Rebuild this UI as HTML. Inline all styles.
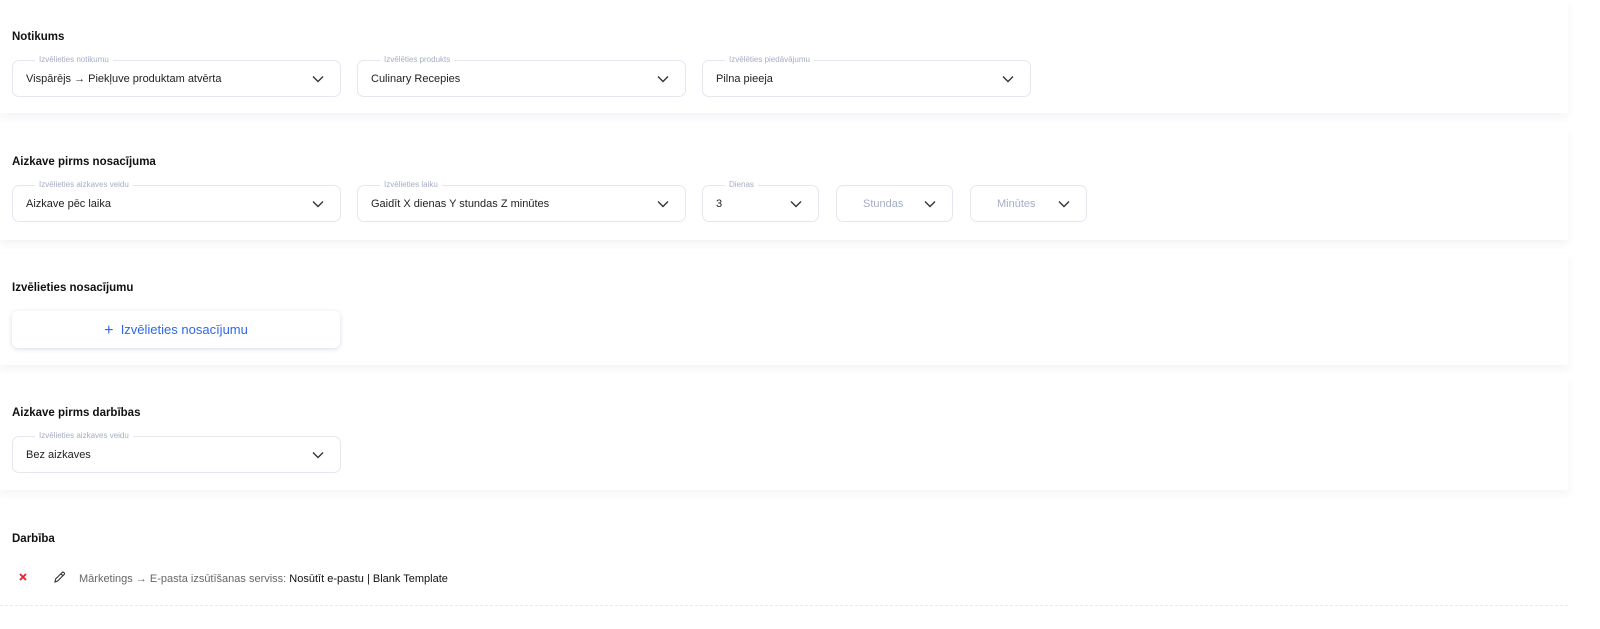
<!DOCTYPE html>
<html><head><style>
body{margin:0;width:1600px;height:629px;background:#fff;font-family:"Liberation Sans",sans-serif;position:relative;overflow:hidden}
.sec{position:absolute;left:0;width:1568px;background:#fff;box-shadow:0 4px 8px rgba(40,60,120,0.06)}
.t{position:absolute;left:12px;font-weight:bold;font-size:11.5px;color:#111}
.f{position:absolute;height:37px;border:1px solid #e4e7ee;border-radius:7px;box-sizing:border-box;font-size:11px;color:#222}
.f span.v{position:absolute;left:13px;top:12px}
.f span.l{position:absolute;left:22px;top:-6px;background:#fff;padding:0 4px;font-size:8px;color:#a5aec4}
.f svg{position:absolute;right:16px;top:14px}
.g{color:#a5aec4}
</style></head><body>
<div class="sec" style="top:0;height:113px"></div>
<div class="sec" style="top:128px;height:112px"></div>
<div class="sec" style="top:254px;height:111px"></div>
<div class="sec" style="top:379px;height:111px"></div>
<div class="sec" style="top:505px;height:100px;box-shadow:none;border-bottom:1px dashed #e8eaef"></div>

<div class="t" style="top:31px">Notikums</div>
<div class="f" style="left:12px;top:60px;width:329px"><span class="l">Izvēlieties notikumu</span><span class="v">Vispārējs → Piekļuve produktam atvērta</span><svg width="12" height="8" viewBox="0 0 12 8"><path d="M1 1.5l5 5 5-5" fill="none" stroke="#333" stroke-width="1.4"/></svg></div>
<div class="f" style="left:357px;top:60px;width:329px"><span class="l">Izvēlēties produkts</span><span class="v">Culinary Recepies</span><svg width="12" height="8" viewBox="0 0 12 8"><path d="M1 1.5l5 5 5-5" fill="none" stroke="#333" stroke-width="1.4"/></svg></div>
<div class="f" style="left:702px;top:60px;width:329px"><span class="l">Izvēlēties piedāvājumu</span><span class="v">Pilna pieeja</span><svg width="12" height="8" viewBox="0 0 12 8"><path d="M1 1.5l5 5 5-5" fill="none" stroke="#333" stroke-width="1.4"/></svg></div>

<div class="t" style="top:156px">Aizkave pirms nosacījuma</div>
<div class="f" style="left:12px;top:185px;width:329px"><span class="l">Izvēlieties aizkaves veidu</span><span class="v">Aizkave pēc laika</span><svg width="12" height="8" viewBox="0 0 12 8"><path d="M1 1.5l5 5 5-5" fill="none" stroke="#333" stroke-width="1.4"/></svg></div>
<div class="f" style="left:357px;top:185px;width:329px"><span class="l">Izvēlieties laiku</span><span class="v">Gaidīt X dienas Y stundas Z minūtes</span><svg width="12" height="8" viewBox="0 0 12 8"><path d="M1 1.5l5 5 5-5" fill="none" stroke="#333" stroke-width="1.4"/></svg></div>
<div class="f" style="left:702px;top:185px;width:117px"><span class="l">Dienas</span><span class="v">3</span><svg width="12" height="8" viewBox="0 0 12 8"><path d="M1 1.5l5 5 5-5" fill="none" stroke="#333" stroke-width="1.4"/></svg></div>
<div class="f" style="left:836px;top:185px;width:117px"><span class="v g" style="left:26px">Stundas</span><svg width="12" height="8" viewBox="0 0 12 8"><path d="M1 1.5l5 5 5-5" fill="none" stroke="#333" stroke-width="1.4"/></svg></div>
<div class="f" style="left:970px;top:185px;width:117px"><span class="v g" style="left:26px">Minūtes</span><svg width="12" height="8" viewBox="0 0 12 8"><path d="M1 1.5l5 5 5-5" fill="none" stroke="#333" stroke-width="1.4"/></svg></div>

<div class="t" style="top:282px">Izvēlieties nosacījumu</div>
<div style="position:absolute;left:12px;top:311px;width:328px;height:37px;border-radius:6px;box-shadow:0 1px 5px rgba(40,60,120,0.18);background:#fff;text-align:center;line-height:37px;color:#2d67ee;font-size:13px"><span style="font-size:16px;vertical-align:-1px">+</span>&nbsp; Izvēlieties nosacījumu</div>

<div class="t" style="top:407px">Aizkave pirms darbības</div>
<div class="f" style="left:12px;top:436px;width:329px"><span class="l">Izvēlieties aizkaves veidu</span><span class="v">Bez aizkaves</span><svg width="12" height="8" viewBox="0 0 12 8"><path d="M1 1.5l5 5 5-5" fill="none" stroke="#333" stroke-width="1.4"/></svg></div>

<div class="t" style="top:533px">Darbība</div>
<svg style="position:absolute;left:19px;top:573px" width="8" height="8" viewBox="0 0 8 8"><path d="M1 1l6 6M7 1L1 7" stroke="#e0222a" stroke-width="1.8"/></svg>
<svg style="position:absolute;left:53px;top:571px" width="13" height="13" viewBox="0 0 13 13"><path d="M2 11l.6-3L9 1.6a1.3 1.3 0 0 1 2 2L4.6 10z M8 2.8l2 2" fill="none" stroke="#333" stroke-width="1.1"/></svg>
<div style="position:absolute;left:79px;top:573px;font-size:11px;color:#666">Mārketings → E-pasta izsūtīšanas serviss: <span style="color:#111">Nosūtīt e-pastu | Blank Template</span></div>
</body></html>
